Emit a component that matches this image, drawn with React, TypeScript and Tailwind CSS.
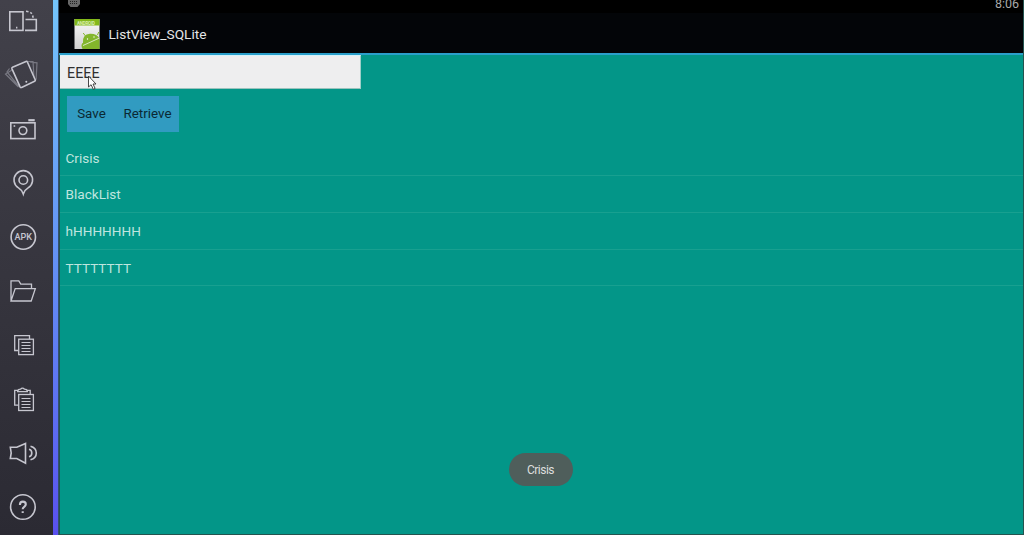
import type { ReactNode } from "react";

function SideIcon({ label, children }: { label: string; children: ReactNode }) {
  return (
    <button aria-label={label} className="block h-[54px] w-[53px] shrink-0">
      <svg width="53" height="54" viewBox="0 0 53 54" fill="none" stroke="#c6c6cf" strokeWidth="1.6">
        {children}
      </svg>
    </button>
  );
}

function Sidebar() {
  return (
    <nav className="-mt-[6px] flex w-[53px] shrink-0 flex-col">
      <SideIcon label="Rotate">
        <rect x="9.8" y="17.8" width="13.2" height="18.6" />
        <path d="M25.5 25.5h10.8v10.9H25M16 33.6h1.4" />
        <path d="M26 17.3q7 .3 7 6.500" strokeDasharray="2.200 2" />
      </SideIcon>
      <SideIcon label="Shake">
        <path d="M12 22l-6.500 4 13 13M9.500 20.500l-2.500 3.500 12 14.500M28 13.500l5 0 1 16M30 14l7 .8-.9 17" stroke="#787882" strokeWidth="1.200" />
        <path d="M12.500 19.300l13.500-5.900q1-.4 1.400.6l7.800 17.800q.4 1-.6 1.400l-13 6.200q-1 .4-1.500-.6l-8.200-18.200q-.3-.9.6-1.300z" />
        <circle cx="26.300" cy="33.800" r="1" fill="#c6c6cf" stroke="none" />
      </SideIcon>
      <SideIcon label="Camera">
        <rect x="10.800" y="20.800" width="24.200" height="15.800" />
        <circle cx="22.900" cy="28.600" r="3.900" />
        <path d="M28.300 18.200h6.400" strokeWidth="2.200" />
        <path d="M13.600 24h1.600" />
      </SideIcon>
      <SideIcon label="Location">
        <path d="M23.300 38q-1.200-4-4.800-6.100a9.300 9.300 0 1 1 9.600 0Q24.500 34 23.300 38z" />
        <circle cx="23.300" cy="24" r="4.300" />
      </SideIcon>
      <SideIcon label="Install APK">
        <circle cx="23.300" cy="27" r="12.200" />
        <text x="23.300" y="30" textAnchor="middle" textLength="17.500" lengthAdjust="spacingAndGlyphs" className="fill-[#c6c6cf] font-[Roboto,sans-serif] text-[8.500px] font-medium" fontSize="8.500" stroke="none">APK</text>
      </SideIcon>
      <SideIcon label="Files">
        <path d="M11 37V16.800h7.800l2 3.300h10.700v4.300M11 37l4.200-12.400h20.100l-4.100 12.400z" strokeWidth="1.300" />
      </SideIcon>
      <SideIcon label="Copy">
        <path d="M18 32.500h-3.300V17.700h14.800V21" strokeWidth="1.300" />
        <rect x="18.700" y="21.200" width="14.700" height="15.400" strokeWidth="1.300" />
        <path d="M21.500 24.500h9M21.500 27.500h9M21.500 30.500h9M21.500 33.500h9" strokeWidth="1.100" />
      </SideIcon>
      <SideIcon label="Paste">
        <path d="M18 33.200h-3.300V18.300h3M27.500 18.300h2.700V22M17.600 19.700q.1-2.500 2.900-2.500 2-2.300 4 0 2.900 0 2.900 2.500z" strokeWidth="1.300" />
        <rect x="18.700" y="22.500" width="14.700" height="16" strokeWidth="1.300" />
        <path d="M21.500 26.500h9M21.500 29.500h9M21.500 32.500h9M21.500 35.500h9" strokeWidth="1.100" />
      </SideIcon>
      <SideIcon label="Volume">
        <path d="M10.300 21.300h6.500l8.700-3.900v19.700l-8.700-4.600h-6.500l.9-5.600z" />
        <path d="M29 23.200q2.800.7 2.800 3.800t-2.800 3.800M30.500 20.200q5.800 1.500 5.800 6.800t-5.800 6.800" />
      </SideIcon>
      <SideIcon label="Help">
        <circle cx="22.900" cy="27" r="12.300" />
        <path d="M19.900 25q0-3.400 3-3.400 2.900 0 2.900 2.700 0 1.400-1.600 2.500-1.500 1-1.500 2.500M22.700 31.200v1.800" strokeWidth="2.100" />
      </SideIcon>
    </nav>
  );
}

function AppIcon() {
  return (
    <svg width="26" height="30" viewBox="0 0 26 30" className="shrink-0">
      <defs>
        <linearGradient id="paper" x2="0" y2="1">
          <stop stopColor="#fafafa" />
          <stop offset="1" stopColor="#d0d0d0" />
        </linearGradient>
      </defs>
      <path d="M.5 0h25v30H.5z" fill="url(#paper)" />
      <path d="M.5 0h25v6.500H.5z" fill="#83b81a" />
      <text x="3" y="6.300" fill="#d9edb2" fontSize="4.500" textLength="18" className="font-[Roboto,sans-serif] font-bold">ANDROID</text>
      <g fill="#83b62b">
        <path d="M9 24Q8 15.500 16 14.800q7-.3 9.500 5V30H8.500q-2-4 0-6z" />
        <path d="M11.500 17l-2.300-3M23.500 16l1.200-3" stroke="#83b62b" />
        <path d="M9 26.500l16.500-7.500" stroke="#e2edcf" strokeWidth=".9" />
        <circle cx="13.500" cy="20" r=".7" fill="#fff" />
        <circle cx="20" cy="18" r=".7" fill="#fff" />
      </g>
    </svg>
  );
}

const items = ["Crisis", "BlackList", "hHHHHHHH", "TTTTTTTT"];

export default function App() {
  return (
    <div className="relative flex h-[535px] w-[1024px] overflow-hidden bg-gradient-to-b from-[#42414a] to-[#2b2a33] font-[Roboto,sans-serif]">
      <Sidebar />
      <div className="w-[6px] shrink-0 border-r border-[#34516e] bg-gradient-to-b from-[#74c5fb] via-[#638ff4] to-[#5950ee]" />
      <main className="flex min-w-0 flex-1 flex-col border-r border-b border-l border-[#24544f] bg-[#039688]">
        <div className="-ml-px flex h-[13px] shrink-0 items-start justify-between bg-black pr-[4px] pl-[9px]">
          <svg width="12" height="8" viewBox="0 0 12 8">
            <path d="M0 0h12v4L9.500 7h-7L0 4z" fill="#686868" />
            <path d="M2 1.500h8M2 3.500h8" stroke="#222" strokeDasharray="1 1" />
          </svg>
          <span className="-mt-[4px] text-[12.5px] leading-[15px] text-[#aaa]">8:06</span>
        </div>
        <header className="-ml-px flex h-[42px] shrink-0 items-center border-b-2 border-[#2b9fca] bg-[#030508] pt-[2px] pl-[15px]">
          <AppIcon />
          <h1 className="ml-[8.5px] text-[13.7px] leading-[20px] text-[#e6e6e6]">ListView_SQLite</h1>
        </header>
        <input
          aria-label="Name"
          defaultValue="EEEE"
          className="h-[34px] w-[301px] shrink-0 border-t border-r border-b border-t-[#d4f3fb] border-r-[#9fcfc9] border-b-[#9bc3bd] bg-[#eeeeef] pt-px pl-[7px] text-[14.3px] text-[#303030] outline-none"
        />
        <div className="mt-[7px] ml-[7px] flex h-[36px] w-[112px] shrink-0 items-center bg-[#319bc1] pt-px text-[13.4px] text-[#0b2933]">
          <button className="w-[49px]">Save</button>
          <button className="w-[63px]">Retrieve</button>
        </div>
        <ul className="mt-[7.5px]">
          {items.map((item) => (
            <li key={item} className="flex h-[36.7px] items-center border-b border-[#18a090] pt-px pl-[5.5px] text-[13.6px] text-[#bfe5df]">
              {item}
            </li>
          ))}
        </ul>
      </main>
      <div role="status" className="absolute top-[453px] left-[509px] flex h-[33px] w-[64px] items-center justify-center rounded-full bg-[#4f5e5b] pr-px text-[12px] tracking-[-0.5px] text-[#dedede]">
        Crisis
      </div>
      <svg className="absolute top-[75px] left-[87px]" width="10" height="16" viewBox="0 0 10 16">
        <path d="M1.500 1v11l2.600-2.300 2.200 4.600 1.800-.9-2.100-4.400h3z" fill="#fff" stroke="#333" strokeWidth=".9" />
      </svg>
    </div>
  );
}
